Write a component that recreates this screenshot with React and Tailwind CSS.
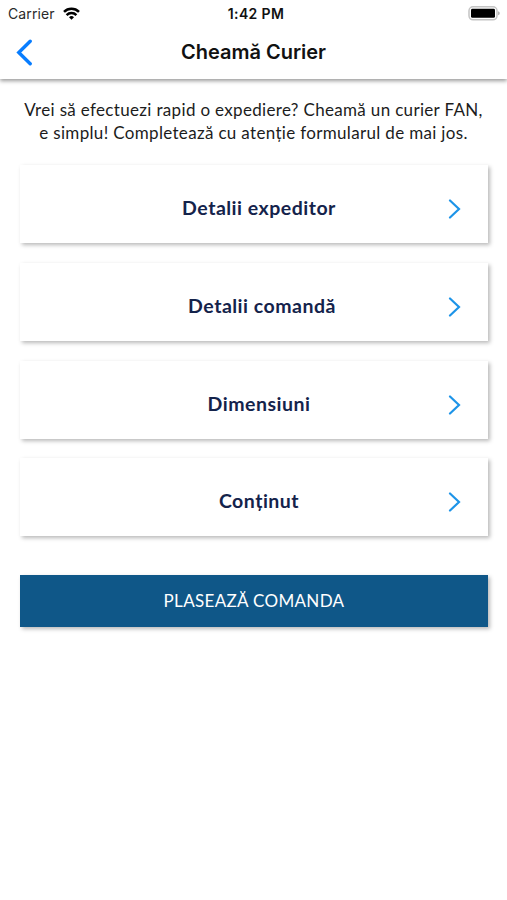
const sections = ["Detalii expeditor", "Detalii comandă", "Dimensiuni", "Conținut"]

function StatusBar() {
  return (
    <div className="grid h-7 grid-cols-3 items-center pl-2 pr-2 text-[#111]">
      <div className="flex items-center gap-2">
        <span className="font-['Inter',sans-serif] text-[14px] leading-none tracking-[0.1px] text-[#2a2a2a]">Carrier</span>
        <svg className="mb-0.5" width="17" height="13" viewBox="0 0 17 13" fill="none" stroke="#000" strokeWidth="2.5">
          <path d="M1 4.9a10.6 10.6 0 0 1 15 0" />
          <path d="M3.6 8.1a6.9 6.9 0 0 1 9.8 0" />
          <path d="M6 10.2a3.6 3.6 0 0 1 5 0L8.5 12.8z" fill="#000" stroke="none" />
        </svg>
      </div>
      <span className="whitespace-nowrap pl-[5px] text-center font-['Inter',sans-serif] text-[14px] font-semibold leading-none tracking-[0.35px]">1:42 PM</span>
      <svg className="-mr-px mb-px justify-self-end" width="32" height="15" viewBox="0 0 32 15">
        <rect x="1" y="0.8" width="28" height="13" rx="4" fill="none" stroke="#c4c4c4" strokeWidth="1.5" />
        <rect x="3" y="2.8" width="24" height="9" rx="1.4" fill="#000" />
        <path d="M30.4 5.2c1.5.6 1.5 3.4 0 4z" fill="#888" />
      </svg>
    </div>
  )
}

function Header() {
  return (
    <div className="grid h-[51px] grid-cols-[60px_1fr_60px] items-center pb-1 shadow-[0_2px_4px_rgba(0,0,0,0.4)] [clip-path:inset(0_0_-8px_0)]">
      <svg className="ml-4" width="17" height="28" viewBox="0 0 17 28" fill="none" stroke="#087dff" strokeWidth="3.4" strokeLinecap="round">
        <path d="M14.2 3.2 2.8 14.5l11.4 11.2" />
      </svg>
      <h1 className="text-center font-['Inter',sans-serif] text-[20px] font-semibold text-[#111]">Cheamă Curier</h1>
    </div>
  )
}

function SectionCard({ title }) {
  return (
    <button className="relative flex h-[78px] w-full items-center justify-center bg-white pl-[10px] pt-2 shadow-[2px_2px_4px_rgba(0,0,0,0.28)]">
      <span className={`text-[19.5px] font-bold leading-7 tracking-[0.5px] text-[#14234b] ${title === "Detalii comandă" ? "pl-1.5" : ""}`}>{title}</span>
      <svg className="absolute right-[26px] top-[34px]" width="14" height="20" viewBox="0 0 14 20" fill="none" stroke="#1d94e8" strokeWidth="2.2" strokeLinecap="round">
        <path d="m2 1.5 9 8.5-9 8.5" />
      </svg>
    </button>
  )
}

export default function App() {
  return (
    <div className="min-h-screen bg-white font-['Lato',sans-serif]">
      <StatusBar />
      <Header />
      <p className="mt-[19px] text-center text-[17px] leading-[23px] tracking-[0.33px] text-[#1c1c1c]">
        Vrei să efectuezi rapid o expediere? Cheamă un curier FAN,
        <br />e simplu! Completează cu atenție formularul de mai jos.
      </p>
      <div className="ml-5 mr-[19px] mt-5 flex flex-col gap-[19.8px] pt-px">
        {sections.map(title => <SectionCard key={title} title={title} />)}
      </div>
      <div className="ml-5 mr-[19px] mt-[38.6px]">
        <button className="h-[52px] w-full bg-[#0f5788] text-[17px] tracking-[0.33px] text-white shadow-[2px_2px_4px_rgba(0,0,0,0.28)]">PLASEAZĂ COMANDA</button>
      </div>
    </div>
  )
}
